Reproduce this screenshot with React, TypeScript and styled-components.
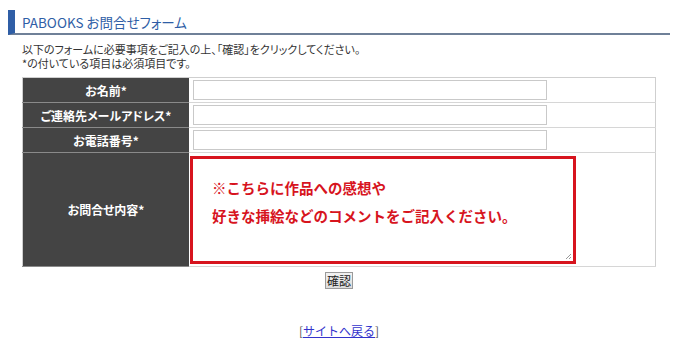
import React from "react";
import styled, { createGlobalStyle } from "styled-components";

const GlobalStyle = createGlobalStyle`
  body {
    margin: 0;
    background: #fff;
    font-family: "Noto Sans CJK JP", "Noto Sans", sans-serif;
    color: #333;
  }
`;

const Page = styled.div`
  width: 662px;
  padding: 10px 0 0 8px;
`;

const Heading = styled.h1`
  margin: 0;
  height: 23px;
  display: flex;
  align-items: center;
  padding-left: 7px;
  border-left: 7px solid #2f5ea6;
  border-bottom: 2px solid #6f8098;
  font-size: 13.5px;
  font-weight: normal;
  color: #2f5ea6;
  font-feature-settings: "palt";
`;

const Body = styled.div`
  padding: 7px 14px 0;
`;

const Intro = styled.p`
  margin: 0 0 7px;
  font-size: 11px;
  line-height: 14px;
  color: #333;
  font-feature-settings: "palt";
`;

const FormTable = styled.table`
  width: 634px;
  border-collapse: collapse;
  border: 1px solid #cfcfcf;
`;

const Label = styled.th`
  width: 166px;
  background: #444;
  color: #fff;
  font-size: 12px;
  font-weight: bold;
  text-align: center;
  border-bottom: 1px solid #8a8a8a;
  padding: 0;
  font-feature-settings: "palt";
`;

const Field = styled.td<{ $tall?: boolean }>`
  height: ${(p) => (p.$tall ? "113px" : "24px")};
  padding: 0 0 0 ${(p) => (p.$tall ? "1px" : "4px")};
  border-bottom: 1px solid #d6d6d6;
  vertical-align: middle;
`;

const TextInput = styled.input`
  display: block;
  box-sizing: border-box;
  width: 354px;
  height: 20px;
  border: 1px solid #c9c9c9;
  background: #fff;
  margin: 0;
`;

const MessageBox = styled.div`
  position: relative;
  box-sizing: border-box;
  width: 386px;
  height: 108px;
  border: 3px solid #d7141e;
  padding: 15px 0 0 19px;
  color: #d7141e;
  font-size: 14.5px;
  font-weight: bold;
  line-height: 28px;
`;

const Grip = styled.svg`
  position: absolute;
  right: 1px;
  bottom: 1px;
`;

const Actions = styled.div`
  display: flex;
  justify-content: center;
  padding: 5px 0 0;
`;

const ConfirmButton = styled.button`
  font-family: "Noto Sans CJK JP", sans-serif;
  font-size: 12px;
  line-height: 14px;
  padding: 0 1px;
  height: 17px;
  border: 1px solid #9a9a9a;
  background: linear-gradient(#f2f2f2, #dcdcdc);
  color: #222;
`;

const Footer = styled.div`
  display: flex;
  justify-content: center;
  padding-top: 33px;
  font-size: 12px;
  color: #555;
  a {
    color: #3333cc;
    text-decoration: underline;
  }
`;

const rows = ["お名前*", "ご連絡先メールアドレス*", "お電話番号*"];

const App: React.FC = () => {
  return (
    <>
      <GlobalStyle />
      <Page>
        <Heading>PABOOKS お問合せフォーム</Heading>
        <Body>
          <Intro>
            以下のフォームに必要事項をご記入の上、「確認」をクリックしてください。
            <br />
            *の付いている項目は必須項目です。
          </Intro>
          <FormTable>
            <tbody>
              {rows.map((r) => (
                <tr key={r}>
                  <Label>{r}</Label>
                  <Field>
                    <TextInput type="text" />
                  </Field>
                </tr>
              ))}
              <tr>
                <Label>お問合せ内容*</Label>
                <Field $tall>
                  <MessageBox>
                    ※こちらに作品への感想や
                    <br />
                    好きな挿絵などのコメントをご記入ください。
                    <Grip width="8" height="8" viewBox="0 0 8 8">
                      <path d="M7 2 L2 7 M7 5 L5 7" stroke="#999" strokeWidth="1" />
                    </Grip>
                  </MessageBox>
                </Field>
              </tr>
            </tbody>
          </FormTable>
          <Actions>
            <ConfirmButton type="button">確認</ConfirmButton>
          </Actions>
          <Footer>
            [<a href="#">サイトへ戻る</a>]
          </Footer>
        </Body>
      </Page>
    </>
  );
};

export default App;
